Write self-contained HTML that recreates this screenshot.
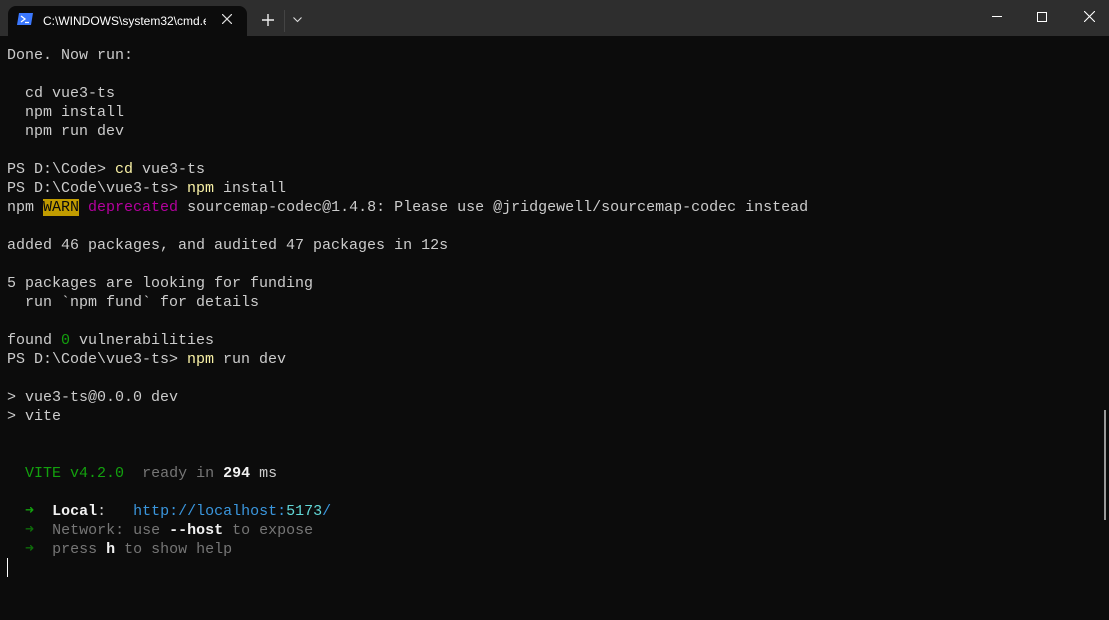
<!DOCTYPE html><html><head><style>
body{margin:0;width:1109px;height:620px;background:#0c0c0c;overflow:hidden;position:relative;font-family:"Liberation Sans",sans-serif}
.tb{position:absolute;left:0;top:0;width:1109px;height:36px;background:#2e2e2e}
.tab{position:absolute;left:8px;top:6px;width:239px;height:30px;background:#0c0c0c;border-radius:8px 8px 0 0}
.tt{position:absolute;left:43px;top:14px;color:#fff;font-size:12px;white-space:nowrap;width:163px;overflow:hidden}
pre{position:absolute;left:7px;top:46px;margin:0;font-family:"Liberation Mono",monospace;font-size:15px;line-height:19px;color:#cccccc}
.y{color:#f9f1a5}.m{color:#b4009e}.w{background:#c19c00;color:#0c0c0c}.g{color:#13a10e}.d{color:#767676}.b{color:#3a96dd}.c{color:#61d6d6}.wh{color:#f2f2f2;font-weight:bold}
</style></head><body>
<div class="tb"></div>
<div class="tab"></div>
<svg style="position:absolute;left:17px;top:13px" width="16" height="12"><polygon points="2,0 16,0 14,12 0,12" fill="#3b78ff"/><path d="M4 3 L8 6 L4 9 M8 9.5 H12" stroke="#fff" stroke-width="1.3" fill="none"/></svg>
<div class="tt">C:\WINDOWS\system32\cmd.exe</div>
<svg style="position:absolute;left:222px;top:14px" width="10" height="10"><path d="M0 0L10 10M10 0L0 10" stroke="#ddd" stroke-width="1.2"/></svg>
<svg style="position:absolute;left:262px;top:14px" width="12" height="12"><path d="M6 0V12M0 6H12" stroke="#eee" stroke-width="1.4"/></svg>
<div style="position:absolute;left:284px;top:10px;width:1px;height:22px;background:#444"></div>
<svg style="position:absolute;left:293px;top:17px" width="9" height="6"><path d="M0.5 0.5L4.5 4.5L8.5 0.5" stroke="#ddd" stroke-width="1.1" fill="none"/></svg>
<div style="position:absolute;left:992px;top:16px;width:10px;height:1px;background:#fff"></div>
<div style="position:absolute;left:1037px;top:12px;width:8px;height:8px;border:1px solid #fff"></div>
<svg style="position:absolute;left:1084px;top:11px" width="11" height="11"><path d="M0 0L11 11M11 0L0 11" stroke="#fff" stroke-width="1.1"/></svg>
<pre>Done. Now run:

  cd vue3-ts
  npm install
  npm run dev

PS D:\Code> <span class="y">cd</span> vue3-ts
PS D:\Code\vue3-ts> <span class="y">npm</span> install
npm <span class="w">WARN</span> <span class="m">deprecated</span> sourcemap-codec@1.4.8: Please use @jridgewell/sourcemap-codec instead

added 46 packages, and audited 47 packages in 12s

5 packages are looking for funding
  run `npm fund` for details

found <span class="g">0</span> vulnerabilities
PS D:\Code\vue3-ts> <span class="y">npm</span> run dev

&gt; vue3-ts@0.0.0 dev
&gt; vite


  <span class="g">VITE v4.2.0</span>  <span class="d">ready in</span> <span class="wh">294</span> ms

  <span class="g">➜</span>  <span class="wh">Local</span>:   <span class="b">http://localhost:<span class="c">5173</span>/</span>
  <span class="g" style="color:#0e6b0a">➜</span>  <span class="d">Network: use </span><span class="wh">--host</span><span class="d"> to expose</span>
  <span class="g" style="color:#0e6b0a">➜</span>  <span class="d">press </span><span class="wh">h</span><span class="d"> to show help</span>
</pre>
<div style="position:absolute;left:7px;top:558px;width:1px;height:19px;background:#fff"></div>
<div style="position:absolute;left:1104px;top:410px;width:2px;height:110px;background:#9a9a9a"></div>
</body></html>
